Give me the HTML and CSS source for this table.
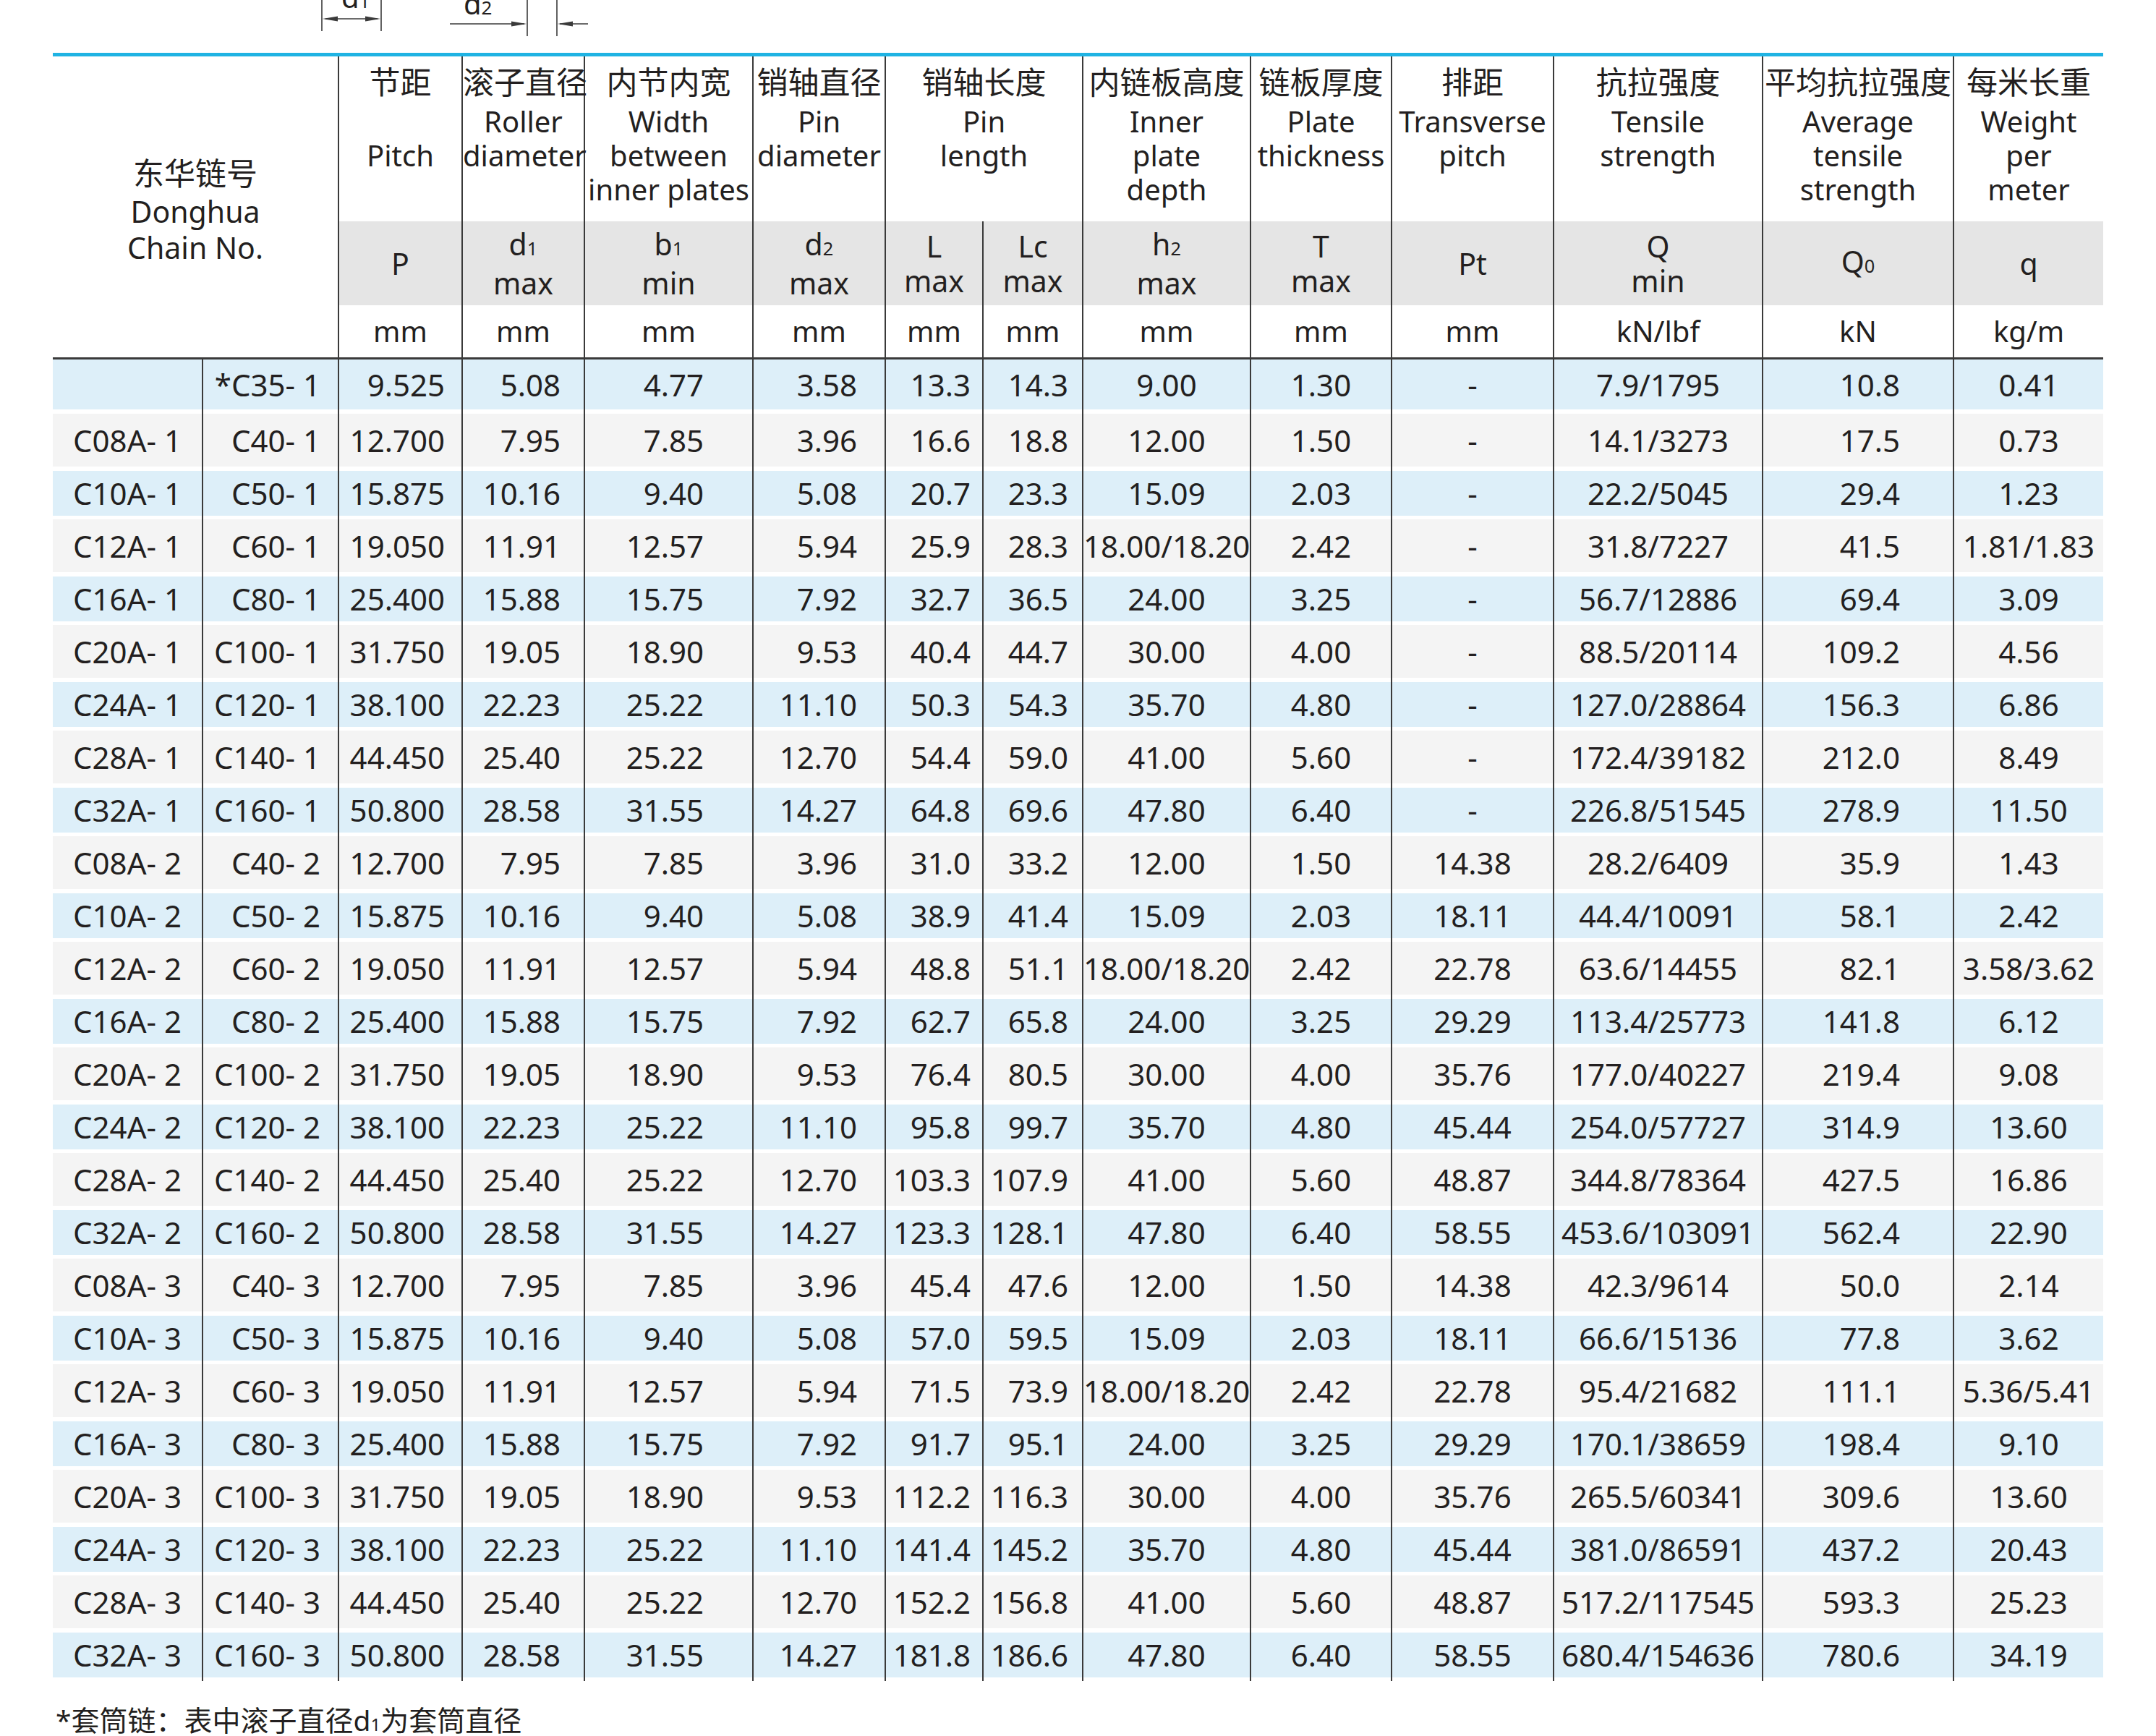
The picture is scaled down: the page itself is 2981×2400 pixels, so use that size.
FILE: index.html
```html
<!DOCTYPE html>
<html lang="zh-CN">
<head>
<meta charset="utf-8">
<title>东华链号 Donghua Chain No.</title>
<link rel="stylesheet" href="styles.css">
</head>
<body>
<div class="page">
  <svg class="dims" width="900" height="73" viewBox="0 0 900 73">
    <g class="dim-lines">
      <line x1="445" y1="0" x2="445" y2="43"/>
      <line x1="527" y1="0" x2="527" y2="43"/>
      <line x1="450" y1="26" x2="522" y2="26"/>
      <line x1="622" y1="33" x2="725" y2="33"/>
      <line x1="729" y1="0" x2="729" y2="50"/>
      <line x1="770" y1="0" x2="770" y2="50"/>
      <line x1="774" y1="33" x2="813" y2="33"/>
    </g>
    <g class="dim-heads">
      <polygon points="446,26 467,22.5 467,29.5"/>
      <polygon points="526,26 505,22.5 505,29.5"/>
      <polygon points="728,33 707,29.5 707,36.5"/>
      <polygon points="771,33 792,29.5 792,36.5"/>
    </g>
    <text class="dim-text" x="472" y="11">d<tspan class="dim-sub">1</tspan></text>
    <text class="dim-text" x="641" y="20">d<tspan class="dim-sub">2</tspan></text>
  </svg>

  <table class="spec">
    <colgroup>
      <col style="width:206px"><col style="width:188px"><col style="width:171px"><col style="width:169px">
      <col style="width:233px"><col style="width:183px"><col style="width:135px"><col style="width:138px">
      <col style="width:232px"><col style="width:195px"><col style="width:224px"><col style="width:289px">
      <col style="width:264px"><col style="width:208px">
    </colgroup>
    <thead>
      <tr class="h-names">
        <th class="chain" colspan="2" rowspan="3">
          <div class="zh">东华链号</div>
          <div class="en">Donghua<br>Chain No.</div>
        </th>
        <th><div class="zh">节距</div><div class="en skip">Pitch</div></th>
        <th><div class="zh">滚子直径</div><div class="en">Roller<br>diameter</div></th>
        <th><div class="zh">内节内宽</div><div class="en">Width<br>between<br>inner plates</div></th>
        <th><div class="zh">销轴直径</div><div class="en">Pin<br>diameter</div></th>
        <th colspan="2"><div class="zh">销轴长度</div><div class="en">Pin<br>length</div></th>
        <th><div class="zh">内链板高度</div><div class="en">Inner<br>plate<br>depth</div></th>
        <th><div class="zh">链板厚度</div><div class="en">Plate<br>thickness</div></th>
        <th><div class="zh">排距</div><div class="en">Transverse<br>pitch</div></th>
        <th><div class="zh">抗拉强度</div><div class="en">Tensile<br>strength</div></th>
        <th><div class="zh">平均抗拉强度</div><div class="en">Average<br>tensile<br>strength</div></th>
        <th><div class="zh">每米长重</div><div class="en">Weight<br>per<br>meter</div></th>
      </tr>
      <tr class="h-sym">
        <th>P</th>
        <th>d<span class="s">1</span><br>max</th>
        <th>b<span class="s">1</span><br>min</th>
        <th>d<span class="s">2</span><br>max</th>
        <th>L<br>max</th>
        <th>Lc<br>max</th>
        <th>h<span class="s">2</span><br>max</th>
        <th>T<br>max</th>
        <th>Pt</th>
        <th>Q<br>min</th>
        <th>Q<span class="s">0</span></th>
        <th>q</th>
      </tr>
      <tr class="h-unit">
        <th>mm</th><th>mm</th><th>mm</th><th>mm</th><th>mm</th><th>mm</th><th>mm</th><th>mm</th><th>mm</th>
        <th>kN/lbf</th><th>kN</th><th>kg/m</th>
      </tr>
    </thead>
    <tbody>
      <tr><td></td><td>*C35- 1</td><td>9.525</td><td>5.08</td><td>4.77</td><td>3.58</td><td>13.3</td><td>14.3</td><td>9.00</td><td>1.30</td><td>-</td><td>7.9/1795</td><td>10.8</td><td>0.41</td></tr>
      <tr><td>C08A- 1</td><td>C40- 1</td><td>12.700</td><td>7.95</td><td>7.85</td><td>3.96</td><td>16.6</td><td>18.8</td><td>12.00</td><td>1.50</td><td>-</td><td>14.1/3273</td><td>17.5</td><td>0.73</td></tr>
      <tr><td>C10A- 1</td><td>C50- 1</td><td>15.875</td><td>10.16</td><td>9.40</td><td>5.08</td><td>20.7</td><td>23.3</td><td>15.09</td><td>2.03</td><td>-</td><td>22.2/5045</td><td>29.4</td><td>1.23</td></tr>
      <tr><td>C12A- 1</td><td>C60- 1</td><td>19.050</td><td>11.91</td><td>12.57</td><td>5.94</td><td>25.9</td><td>28.3</td><td>18.00/18.20</td><td>2.42</td><td>-</td><td>31.8/7227</td><td>41.5</td><td>1.81/1.83</td></tr>
      <tr><td>C16A- 1</td><td>C80- 1</td><td>25.400</td><td>15.88</td><td>15.75</td><td>7.92</td><td>32.7</td><td>36.5</td><td>24.00</td><td>3.25</td><td>-</td><td>56.7/12886</td><td>69.4</td><td>3.09</td></tr>
      <tr><td>C20A- 1</td><td>C100- 1</td><td>31.750</td><td>19.05</td><td>18.90</td><td>9.53</td><td>40.4</td><td>44.7</td><td>30.00</td><td>4.00</td><td>-</td><td>88.5/20114</td><td>109.2</td><td>4.56</td></tr>
      <tr><td>C24A- 1</td><td>C120- 1</td><td>38.100</td><td>22.23</td><td>25.22</td><td>11.10</td><td>50.3</td><td>54.3</td><td>35.70</td><td>4.80</td><td>-</td><td>127.0/28864</td><td>156.3</td><td>6.86</td></tr>
      <tr><td>C28A- 1</td><td>C140- 1</td><td>44.450</td><td>25.40</td><td>25.22</td><td>12.70</td><td>54.4</td><td>59.0</td><td>41.00</td><td>5.60</td><td>-</td><td>172.4/39182</td><td>212.0</td><td>8.49</td></tr>
      <tr><td>C32A- 1</td><td>C160- 1</td><td>50.800</td><td>28.58</td><td>31.55</td><td>14.27</td><td>64.8</td><td>69.6</td><td>47.80</td><td>6.40</td><td>-</td><td>226.8/51545</td><td>278.9</td><td>11.50</td></tr>
      <tr><td>C08A- 2</td><td>C40- 2</td><td>12.700</td><td>7.95</td><td>7.85</td><td>3.96</td><td>31.0</td><td>33.2</td><td>12.00</td><td>1.50</td><td>14.38</td><td>28.2/6409</td><td>35.9</td><td>1.43</td></tr>
      <tr><td>C10A- 2</td><td>C50- 2</td><td>15.875</td><td>10.16</td><td>9.40</td><td>5.08</td><td>38.9</td><td>41.4</td><td>15.09</td><td>2.03</td><td>18.11</td><td>44.4/10091</td><td>58.1</td><td>2.42</td></tr>
      <tr><td>C12A- 2</td><td>C60- 2</td><td>19.050</td><td>11.91</td><td>12.57</td><td>5.94</td><td>48.8</td><td>51.1</td><td>18.00/18.20</td><td>2.42</td><td>22.78</td><td>63.6/14455</td><td>82.1</td><td>3.58/3.62</td></tr>
      <tr><td>C16A- 2</td><td>C80- 2</td><td>25.400</td><td>15.88</td><td>15.75</td><td>7.92</td><td>62.7</td><td>65.8</td><td>24.00</td><td>3.25</td><td>29.29</td><td>113.4/25773</td><td>141.8</td><td>6.12</td></tr>
      <tr><td>C20A- 2</td><td>C100- 2</td><td>31.750</td><td>19.05</td><td>18.90</td><td>9.53</td><td>76.4</td><td>80.5</td><td>30.00</td><td>4.00</td><td>35.76</td><td>177.0/40227</td><td>219.4</td><td>9.08</td></tr>
      <tr><td>C24A- 2</td><td>C120- 2</td><td>38.100</td><td>22.23</td><td>25.22</td><td>11.10</td><td>95.8</td><td>99.7</td><td>35.70</td><td>4.80</td><td>45.44</td><td>254.0/57727</td><td>314.9</td><td>13.60</td></tr>
      <tr><td>C28A- 2</td><td>C140- 2</td><td>44.450</td><td>25.40</td><td>25.22</td><td>12.70</td><td>103.3</td><td>107.9</td><td>41.00</td><td>5.60</td><td>48.87</td><td>344.8/78364</td><td>427.5</td><td>16.86</td></tr>
      <tr><td>C32A- 2</td><td>C160- 2</td><td>50.800</td><td>28.58</td><td>31.55</td><td>14.27</td><td>123.3</td><td>128.1</td><td>47.80</td><td>6.40</td><td>58.55</td><td>453.6/103091</td><td>562.4</td><td>22.90</td></tr>
      <tr><td>C08A- 3</td><td>C40- 3</td><td>12.700</td><td>7.95</td><td>7.85</td><td>3.96</td><td>45.4</td><td>47.6</td><td>12.00</td><td>1.50</td><td>14.38</td><td>42.3/9614</td><td>50.0</td><td>2.14</td></tr>
      <tr><td>C10A- 3</td><td>C50- 3</td><td>15.875</td><td>10.16</td><td>9.40</td><td>5.08</td><td>57.0</td><td>59.5</td><td>15.09</td><td>2.03</td><td>18.11</td><td>66.6/15136</td><td>77.8</td><td>3.62</td></tr>
      <tr><td>C12A- 3</td><td>C60- 3</td><td>19.050</td><td>11.91</td><td>12.57</td><td>5.94</td><td>71.5</td><td>73.9</td><td>18.00/18.20</td><td>2.42</td><td>22.78</td><td>95.4/21682</td><td>111.1</td><td>5.36/5.41</td></tr>
      <tr><td>C16A- 3</td><td>C80- 3</td><td>25.400</td><td>15.88</td><td>15.75</td><td>7.92</td><td>91.7</td><td>95.1</td><td>24.00</td><td>3.25</td><td>29.29</td><td>170.1/38659</td><td>198.4</td><td>9.10</td></tr>
      <tr><td>C20A- 3</td><td>C100- 3</td><td>31.750</td><td>19.05</td><td>18.90</td><td>9.53</td><td>112.2</td><td>116.3</td><td>30.00</td><td>4.00</td><td>35.76</td><td>265.5/60341</td><td>309.6</td><td>13.60</td></tr>
      <tr><td>C24A- 3</td><td>C120- 3</td><td>38.100</td><td>22.23</td><td>25.22</td><td>11.10</td><td>141.4</td><td>145.2</td><td>35.70</td><td>4.80</td><td>45.44</td><td>381.0/86591</td><td>437.2</td><td>20.43</td></tr>
      <tr><td>C28A- 3</td><td>C140- 3</td><td>44.450</td><td>25.40</td><td>25.22</td><td>12.70</td><td>152.2</td><td>156.8</td><td>41.00</td><td>5.60</td><td>48.87</td><td>517.2/117545</td><td>593.3</td><td>25.23</td></tr>
      <tr><td>C32A- 3</td><td>C160- 3</td><td>50.800</td><td>28.58</td><td>31.55</td><td>14.27</td><td>181.8</td><td>186.6</td><td>47.80</td><td>6.40</td><td>58.55</td><td>680.4/154636</td><td>780.6</td><td>34.19</td></tr>
    </tbody>
  </table>

  <p class="note">*套筒链：表中滚子直径d<span class="s">1</span>为套筒直径</p>
</div>
</body>
</html>
```

FILE: styles.css
```css
* {
  box-sizing: border-box;
}

html, body {
  margin: 0;
  padding: 0;
  background: #ffffff;
}

body {
  color: #231f20;
  font-family: "Noto Sans", "Noto Sans CJK SC", sans-serif;
}

.page {
  width: 2981px;
  height: 2400px;
  overflow: hidden;
}

/* dimension fragment at the top */
.dims {
  display: block;
  width: 900px;
  height: 73px;
}

.dim-lines line {
  stroke: #3a3a3a;
  stroke-width: 1.6;
  fill: none;
}

.dim-heads polygon {
  fill: #3a3a3a;
}

.dim-text {
  font-family: "Noto Sans", sans-serif;
  font-size: 40px;
  fill: #231f20;
}

.dim-sub {
  font-size: 26px;
}

/* table */
.spec {
  margin-left: 73px;
  width: 2835px;
  table-layout: fixed;
  border-collapse: separate;
  border-spacing: 0;
  border-top: 5px solid #1fb3e3;
}

.spec th,
.spec td {
  padding: 0;
  font-weight: normal;
  text-align: center;
  white-space: nowrap;
}

.s {
  font-size: 0.62em;
}

/* header: names */
.h-names th {
  height: 228px;
  vertical-align: top;
  padding-top: 10px;
}

.h-names th + th {
  border-left: 2px solid #3a3a3a;
}

.zh {
  font-size: 43px;
  line-height: 52px;
}

.en {
  font-size: 40px;
  line-height: 47px;
  margin-top: 4px;
}

.en.skip {
  padding-top: 47px;
}

.h-names th.chain {
  vertical-align: middle;
  padding-top: 8px;
  border-bottom: 3px solid #3a3a3a;
}

.chain .zh {
  line-height: 54px;
}

.chain .en {
  font-size: 41px;
  line-height: 50px;
  margin-top: 0;
}

/* header: symbols */
.h-sym th {
  height: 116px;
  background: #e5e5e5;
  font-size: 41px;
  line-height: 48px;
  border-left: 2px solid #3a3a3a;
}

/* header: units */
.h-unit th {
  height: 75px;
  font-size: 40px;
  line-height: 48px;
  border-left: 2px solid #3a3a3a;
  border-bottom: 3px solid #3a3a3a;
}

/* body rows */
.spec tbody td {
  font-size: 42px;
  line-height: 50px;
  height: 79px;
  padding-bottom: 6px;
  background: #f4f4f4;
  box-shadow: inset 0 -6px 0 #ffffff;
}

.spec tbody tr:nth-child(odd) td {
  background: #ddeff9;
  height: 67px;
  padding-bottom: 5px;
  box-shadow: inset 0 -5px 0 #ffffff;
}

.spec tbody tr:first-child td {
  height: 75px;
  padding-bottom: 6px;
  box-shadow: inset 0 -6px 0 #ffffff;
}

.spec tbody td + td {
  border-left: 2px solid #3a3a3a;
}

.spec tbody td:nth-child(2) { text-align: right; padding-right: 24px; }
.spec tbody td:nth-child(3) { text-align: right; padding-right: 23px; }
.spec tbody td:nth-child(4) { text-align: right; padding-right: 32px; }
.spec tbody td:nth-child(5) { text-align: right; padding-right: 67px; }
.spec tbody td:nth-child(6) { text-align: right; padding-right: 38px; }
.spec tbody td:nth-child(7) { text-align: right; padding-right: 16px; }
.spec tbody td:nth-child(8) { text-align: right; padding-right: 19px; }
.spec tbody td:nth-child(13) { text-align: right; padding-right: 73px; }

/* footnote */
.note {
  margin: 30px 0 0 77px;
  font-size: 39px;
  line-height: 48px;
}
```
